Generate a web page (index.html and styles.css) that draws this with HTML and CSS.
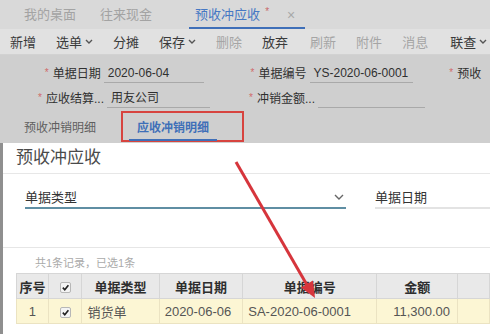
FILE: index.html
```html
<!DOCTYPE html>
<html lang="zh-CN">
  <head>
    <meta charset="UTF-8" />
    <meta name="viewport" content="width=device-width, initial-scale=1.0" />
    <title>预收冲应收</title>
    <link rel="stylesheet" href="styles.css">
  </head>
  <body>
    <div class="page">
      <!-- 顶部页签 -->
      <div class="tabbar">
        <span class="tab">我的桌面</span>
        <span class="tab">往来现金</span>
        <span class="tab active">预收冲应收<i class="dirty">*</i></span>
        <span class="tab_close">×</span>
      </div>

      <!-- 工具栏 -->
      <div class="toolbar">
        <span class="btn">新增</span>
        <span class="btn">选单<svg class="caret" viewBox="0 0 8 5"><path d="M1 1 4 4 7 1" /></svg></span>
        <span class="btn">分摊</span>
        <span class="btn">保存<svg class="caret" viewBox="0 0 8 5"><path d="M1 1 4 4 7 1" /></svg></span>
        <span class="btn off">删除</span>
        <span class="btn">放弃</span>
        <span class="sep"></span>
        <span class="btn off">刷新</span>
        <span class="btn off">附件</span>
        <span class="btn off">消息</span>
        <span class="sep"></span>
        <span class="btn">联查<svg class="caret" viewBox="0 0 8 5"><path d="M1 1 4 4 7 1" /></svg></span>
      </div>

      <!-- 表头字段 -->
      <div class="form">
        <div class="form_row">
          <span class="label l1"><i class="req">*</i>单据日期</span>
          <span class="input w1">2020-06-04</span>
          <span class="label l2"><i class="req">*</i>单据编号</span>
          <span class="input w2">YS-2020-06-0001</span>
          <span class="label l3"><i class="req">*</i>预收</span>
        </div>
        <div class="form_row">
          <span class="label l1"><i class="req">*</i>应收结算...</span>
          <span class="input w1">用友公司</span>
          <span class="label l2"><i class="req">*</i>冲销金额...</span>
          <span class="input w2"></span>
        </div>
        <div class="subtabs">
          <span class="subtab">预收冲销明细</span>
          <span class="mark"><span class="subtab current">应收冲销明细</span></span>
        </div>
      </div>
    </div>

    <!-- 弹窗 -->
    <div class="modal">
      <div class="modal_title">预收冲应收</div>
      <div class="filters">
        <div class="filter f1">
          <span>单据类型</span>
          <svg class="chevron" viewBox="0 0 10 6"><path d="M1 1 5 5 9 1" /></svg>
        </div>
        <div class="filter f2"><span>单据日期</span></div>
      </div>
      <div class="count">共1条记录，已选1条</div>
      <table class="grid">
        <colgroup>
          <col style="width:33px">
          <col style="width:38px">
          <col style="width:86px">
          <col style="width:86px">
          <col style="width:142px">
          <col style="width:85px">
          <col style="width:40px">
        </colgroup>
        <thead>
          <tr>
            <th>序号</th>
            <th><span class="check"><svg viewBox="0 0 10 10"><path d="M2 5.2 4.2 7.5 8.2 2.5" /></svg></span></th>
            <th>单据类型</th>
            <th>单据日期</th>
            <th>单据编号</th>
            <th>金额</th>
            <th></th>
          </tr>
        </thead>
        <tbody>
          <tr>
            <td class="center">1</td>
            <td class="center"><span class="check"><svg viewBox="0 0 10 10"><path d="M2 5.2 4.2 7.5 8.2 2.5" /></svg></span></td>
            <td>销货单</td>
            <td>2020-06-06</td>
            <td>SA-2020-06-0001</td>
            <td class="num">11,300.00</td>
            <td></td>
          </tr>
        </tbody>
      </table>
    </div>

    <!-- 标注箭头 -->
    <svg class="arrow" viewBox="0 0 490 334">
      <line x1="236" y1="162" x2="307" y2="285" />
      <polygon points="315,298 301,287.5 313,280.5" />
    </svg>
  </body>
</html>
```

FILE: styles.css
```css
* {
  box-sizing: border-box;
}

body {
  margin: 0;
  width: 490px;
  height: 334px;
  overflow: hidden;
  position: relative;
  background-color: #8f8f8f;
  font-family: "Liberation Sans", "Noto Sans CJK SC", sans-serif;
  color: #333333;
}

i {
  font-style: normal;
}

/* 顶部页签 */
.tabbar {
  display: flex;
  align-items: center;
  height: 29px;
  padding-left: 24px;
  background-color: #d9d9d9;
  font-size: 13px;
}

.tab {
  position: relative;
  height: 29px;
  line-height: 29px;
  margin-right: 24px;
  color: #a3a3a3;
}

.tab.active {
  margin-left: 19px;
  margin-right: 0;
  padding: 0 12px 0 0;
  color: #4678c4;
}

.tab.active::after {
  content: "";
  position: absolute;
  left: -6px;
  right: -33px;
  bottom: 0;
  height: 2px;
  background-color: #3f6fb8;
}

.dirty {
  position: absolute;
  right: 3px;
  top: -3px;
  font-size: 10px;
  color: #c86a6a;
}

.tab_close {
  margin-left: 15px;
  font-size: 14px;
  color: #a8a8a8;
}

/* 工具栏 */
.toolbar {
  display: flex;
  align-items: center;
  height: 26px;
  padding-left: 10px;
  background-color: #e1e1e1;
  border-bottom: 1px solid #d2d2d2;
  font-size: 13px;
  white-space: nowrap;
}

.btn {
  display: flex;
  align-items: center;
  margin-right: 20px;
  color: #3a3a3a;
}

.btn.off {
  color: #a5a5a5;
}

.caret {
  width: 8px;
  height: 5px;
  margin-left: 3px;
  fill: none;
  stroke: #555555;
  stroke-width: 1.4;
}

.sep {
  width: 1px;
  height: 14px;
  margin: 0 10px 0 -8px;
  background-color: #c4c4c4;
}

/* 表头字段 */
.form {
  height: 88px;
  padding-top: 5px;
  background-color: #cfcfcf;
  font-size: 12px;
  white-space: nowrap;
}

.form_row {
  display: flex;
  align-items: center;
  height: 25px;
}

.label {
  text-align: right;
  color: #2f2f2f;
}

.req {
  margin-right: 4px;
  color: #cf6b6b;
  font-size: 10px;
  vertical-align: 2px;
}

.l1 {
  width: 104px;
}

.l2 {
  width: 70px;
  margin-left: 35px;
}

.l3 {
  width: 42px;
  margin-left: 36px;
  text-align: left;
}

.input {
  height: 21px;
  line-height: 22px;
  margin-left: 3px;
  padding-left: 4px;
  border-bottom: 1px solid #a9a9a9;
  color: #2f2f2f;
}

.w1 {
  width: 103px;
}

.w2 {
  width: 107px;
}

.subtabs {
  display: flex;
  align-items: center;
  height: 32px;
  padding-left: 24px;
}

.subtab {
  color: #5f5f5f;
}

.mark {
  display: flex;
  align-items: center;
  height: 31px;
  width: 123px;
  margin-left: 25px;
  padding-left: 6px;
  border: 2px solid #d7443f;
}

.subtab.current {
  position: relative;
  padding: 0 8px;
  color: #3f6fb8;
  font-weight: bold;
}

.subtab.current::after {
  content: "";
  position: absolute;
  left: 0;
  right: 0;
  bottom: -6px;
  height: 2px;
  background-color: #3f6fb8;
}

/* 弹窗 */
.modal {
  position: absolute;
  left: 3px;
  top: 143px;
  right: 0;
  bottom: 0;
  background-color: #ffffff;
}

.modal_title {
  height: 31px;
  line-height: 29px;
  padding-left: 13px;
  font-size: 17px;
  color: #4a4a4a;
  border-bottom: 1px solid #e7e7e7;
}

.filters {
  display: flex;
  height: 74px;
  padding: 12px 0 0 22px;
  border-bottom: 1px solid #e6e6e6;
  font-size: 13px;
}

.filter {
  display: flex;
  align-items: center;
  justify-content: space-between;
  height: 23px;
  color: #333333;
}

.f1 {
  width: 321px;
  padding-right: 2px;
  border-bottom: 2px solid #5f8ea3;
}

.f2 {
  flex: 1;
  margin-left: 29px;
  border-bottom: 2px solid #e3e3e3;
}

.chevron {
  width: 10px;
  height: 6px;
  fill: none;
  stroke: #666666;
  stroke-width: 1.4;
}

.count {
  height: 25px;
  padding: 6px 0 0 32px;
  line-height: 18px;
  font-size: 11px;
  color: #aaaaaa;
}

.grid {
  margin-left: 13px;
  border-collapse: collapse;
  table-layout: fixed;
  font-size: 13px;
  white-space: nowrap;
}

.grid th {
  height: 25px;
  background-color: #e9e9e9;
  border: 1px solid #d6d6d6;
  color: #2e2e2e;
  font-weight: bold;
  text-align: center;
}

.grid td {
  height: 25px;
  padding: 0 5px;
  background-color: #fcf6d4;
  border: 1px solid #ebe3c2;
  color: #555555;
}

.grid .center {
  text-align: center;
}

.grid .num {
  text-align: right;
  padding-right: 7px;
}

.check {
  display: inline-flex;
  align-items: center;
  justify-content: center;
  width: 11px;
  height: 11px;
  vertical-align: -1px;
  background-color: #f4f4f4;
  border: 1px solid #b7b7b7;
  border-radius: 2px;
}

.check svg {
  width: 9px;
  height: 9px;
  fill: none;
  stroke: #222222;
  stroke-width: 1.8;
}

/* 标注箭头 */
.arrow {
  position: absolute;
  left: 0;
  top: 0;
  width: 490px;
  height: 334px;
  pointer-events: none;
}

.arrow line {
  stroke: #d6353c;
  stroke-width: 3;
}

.arrow polygon {
  fill: #d6353c;
}
```
